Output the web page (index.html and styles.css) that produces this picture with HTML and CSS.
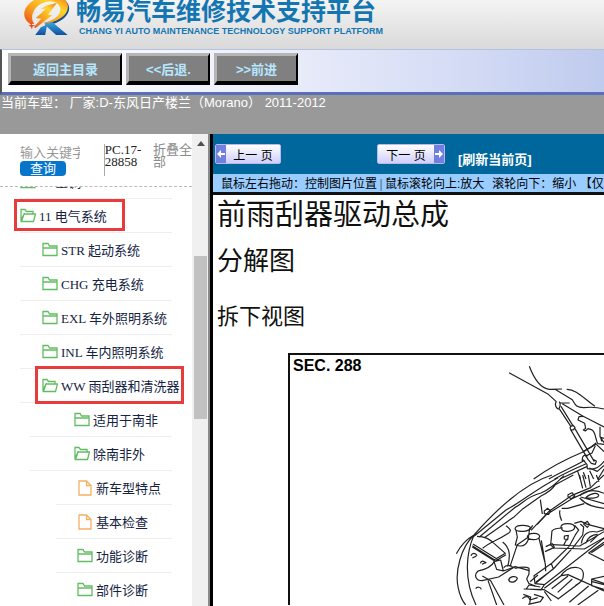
FILE: index.html
```html
<!DOCTYPE html>
<html lang="zh-CN">
<head>
<meta charset="utf-8">
<title>畅易汽车维修技术支持平台</title>
<link rel="stylesheet" href="styles.css">
</head>
<body>
<svg class="defs" width="0" height="0" aria-hidden="true">
  <symbol id="folder" viewBox="0 0 16 15"><path d="M1 13.500V1.500h5l1.500 2.500h7.500v9.500H1zM1 6h14"/></symbol>
  <symbol id="folder-open" viewBox="0 0 16 15"><path d="M1 13.500V1.500h4l1.500 2h6.500v2.500M1.500 13.500 4 6h11.500L13.500 13.500zM1.500 11 4.500 5"/></symbol>
  <symbol id="file" viewBox="0 0 14 16"><path d="M1 1h7.500L13 5.500V15H1zM8.500 1v4.500H13"/></symbol>
</svg>

<header class="banner">
  <svg class="logo" viewBox="70 0 145 108" aria-hidden="true">
    <defs>
      <linearGradient id="flame" x1="0" y1="1" x2="1" y2="0"><stop offset="0" stop-color="#e8461c"/><stop offset=".35" stop-color="#f79a1c"/><stop offset=".7" stop-color="#ffd52a"/><stop offset="1" stop-color="#f27a18"/></linearGradient>
      <linearGradient id="leg" x1="0" y1="0" x2="0" y2="1"><stop offset="0" stop-color="#36a8df"/><stop offset="1" stop-color="#124f9f"/></linearGradient>
    </defs>
    <path fill="#174c96" d="M190-5c36 22 20 64-32 78l-10-5c44-10 60-38 42-73z"/>
    <path fill="url(#leg)" d="M135 70l24-3 46 38h-35l-33-30zM107 105l17-23 19-8-6 31z"/>
    <path fill="url(#flame)" d="M93 73C56 50 76 6 121-8h66c36 20 20 66-42 78l-15-2c48-8 65-38 44-58-25-14-58-2-71 22-8 16-7 29 1 39z"/>
    <path fill="url(#flame)" d="M172 9l-26 35 12 2-50 38-5-2 22-26-16-2 31-29-15 2 15-11z"/>
    <path fill="#e44b1e" d="M94 66l4 9 10 1-9 4-2 8-4-8-7-3 8-2z"/>
  </svg>
  <div class="brand">
    <div class="brand-name">畅易汽车维修技术支持平台</div>
    <div class="brand-sub">CHANG YI AUTO MAINTENANCE TECHNOLOGY SUPPORT PLATFORM</div>
  </div>
</header>

<nav class="toolbar">
  <button class="tool wide">返回主目录</button>
  <button class="tool">&lt;&lt;后退.</button>
  <button class="tool">&gt;&gt;前进</button>
</nav>

<div class="model">当前车型： 厂家:D-东风日产楼兰（Morano） 2011-2012</div>

<div class="workspace">
  <aside class="sidebar">
    <div class="side-main">
      <form class="search">
        <div class="query">
          <input class="keyword" type="text" placeholder="输入关键字" aria-label="关键字">
          <button class="go" type="button">查询</button>
        </div>
        <div class="code">PC.17-28858</div>
        <a class="collapse" href="#">折叠全部</a>
      </form>
      <div class="tree-view">
        <ul class="tree">
          <li class="row root"><svg class="icon"><use href="#folder"/></svg><a href="#">10 空调</a></li>
          <li class="row root marked"><svg class="icon"><use href="#folder-open"/></svg><a href="#">11 电气系统</a></li>
          <li class="row system"><svg class="icon"><use href="#folder"/></svg><a href="#">STR 起动系统</a></li>
          <li class="row system"><svg class="icon"><use href="#folder"/></svg><a href="#">CHG 充电系统</a></li>
          <li class="row system"><svg class="icon"><use href="#folder"/></svg><a href="#">EXL 车外照明系统</a></li>
          <li class="row system"><svg class="icon"><use href="#folder"/></svg><a href="#">INL 车内照明系统</a></li>
          <li class="row system marked"><svg class="icon"><use href="#folder-open"/></svg><a href="#">WW 雨刮器和清洗器</a></li>
          <li class="row region"><svg class="icon"><use href="#folder"/></svg><a href="#">适用于南非</a></li>
          <li class="row region"><svg class="icon"><use href="#folder-open"/></svg><a href="#">除南非外</a></li>
          <li class="row topic"><svg class="icon doc"><use href="#file"/></svg><a href="#">新车型特点</a></li>
          <li class="row topic"><svg class="icon doc"><use href="#file"/></svg><a href="#">基本检查</a></li>
          <li class="row topic"><svg class="icon"><use href="#folder"/></svg><a href="#">功能诊断</a></li>
          <li class="row topic"><svg class="icon"><use href="#folder"/></svg><a href="#">部件诊断</a></li>
        </ul>
      </div>
    </div>
    <div class="scrollbar"><span class="arrow"></span><span class="thumb"></span></div>
  </aside>

  <main class="viewer">
    <div class="pager">
      <button class="page prev"><svg class="cap" viewBox="0 0 10 16"><path d="M1 8l4-4v3h4v2H5v3z"/></svg><span>上一 页</span></button>
      <button class="page next"><span>下一 页</span><svg class="cap" viewBox="0 0 10 16"><path d="M9 8L5 4v3H1v2h4v3z"/></svg></button>
      <a class="refresh" href="#">[刷新当前页]</a>
    </div>
    <div class="hint"><span>鼠标左右拖动：控制图片位置</span><span class="bar">|</span><span>鼠标滚轮向上:放大</span><span class="later">滚轮向下：缩小&nbsp;【仅</span></div>
    <article class="document">
      <h1>前雨刮器驱动总成</h1>
      <h2>分解图</h2>
      <h3>拆下视图</h3>
      <figure class="figure">
        <figcaption>SEC. 288</figcaption>
        <svg class="drawing" viewBox="290 356 314 250" preserveAspectRatio="xMinYMin slice" aria-hidden="true">
          <!-- hood, stay and wiper linkage -->
          <g transform="translate(440 350) scale(.33333)">
            <path d="M207 71 325 136 349 158M268 52c12 32 30 66 60 69l38-1M345 121l52 31c11 20 14 23 34 24 25-3 39-2 61 4M380 121c28-1 50 26 85 51M360 162h29M367 164l61 37 64 33"/>
            <path d="M349 157c-6 9-1 23 8 23M358 158c4 7 3 14-1 20M357 178l36 55M363 172l37 60M390 235l8-7 7 7-5 8-8-1zM392 242l52 89M403 236l60 102M444 331l10 12 12 3 3-10-9-4"/>
            <path d="M430 202l-13 1-3 10 20 10 3 15-7 5 6 3 8-7 10 3c15 5 12 35 20 42l18 2M480 233v30l12 18M492 268l-10-3 3 12M466 283l26 25M469 281l-15 12-26 15M466 290l-10 22-20 10"/>
            <path d="M281 390C330 355 375 331 429 309l39-23M327 390c35-21 70-34 107-56M344 390c33-19 65-33 93-45M360 390l80-37M427 337c-2-18 7-22 17-16M429 332l12 15 1 12c16 4 34 0 50-22M448 357l24 10 20-18M413 367l8 23M430 370l8 20M449 365l12 25M492 360l-18 30"/>
          </g>
          <!-- engine bay -->
          <g transform="translate(440 476) scale(.33333)">
            <path d="M336 0C270 20 190 80 102 180c-38 35-59 110-47 160 5 24 14 40 22 50M49 236C64 208 84 190 102 180M102 180C80 230 69 310 108 390M354 8C275 50 247 80 198 105L102 184M372 2C345 28 328 44 303 54 260 64 246 88 224 98L118 186M400 0l-54 29c-10 16-24 25-43 34l-54 38-26 24-43 30-47 33"/>
            <path d="M418 0l10 40M428 0l10 38M445 0l6 35M469 0l8 20M492 0l-40 38-56 23-69 48-54 57M480 33l-84 38-77 48-27 29M384 59l12-6 8 10-10 8-10-6zM313 108l10-8 9 8-6 10-13-2zM301 74l6 43M365 100h18l50-14"/>
            <path d="M419 63c15-19 49-20 73-8M419 69c21 23 47 28 73 31M437 68c20-17 40-15 39-6-4 8-25 9-39 6M422 66l70 20M360 106c-3 10 0 20 5 31"/>
            <path d="M225 161c2-15 47-11 46-2-4 12-43 14-46 2zM228 166l4 20-6 24c20 7 32 2 38-14l5-36M278 151l-8 13M262 185c5-15 37-11 37 0-3 12-35 12-37 0zM262 188l-30 21-22 66M297 190l19 77 1 22M304 196l11 66M315 230l28-13-6-11-20 9"/>
            <path d="M111 184c24 0 36 7 51 21l34 30-33 19-66-42M99 207l78 49M97 216l67 42M128 220c24-20 45-24 72-42 20-10 9-17-2-26M188 201c22 18 24 40 15 74M198 239l-37 22M162 260l20-5 8 33-20-5zM190 288l36-13 42 12"/>
            <path d="M93 242c4-10 14-8 18 0M97 249l12-6M121 265c3-12 15-4 18-1M126 268l10-5M107 341c4-7 15-5 17 2M163 260c-12 21-35 25-49 28-14 13-6 29 12 29l50-11 48-31M127 303l25 14 40 73M144 316l26 74M206 315c3-12 22-13 26-5-4 13-22 15-26 5zM191 278c7-10 24-8 28 0M224 280c22-5 35-5 43 0v17l-7 15 7 14 19 7"/>
            <path d="M336 167l-4 43 13 11M336 168c6-8 22-9 33-9M363 155c2-13 39-12 41 1 0 14-37 20-41 2zM403 145l20-6 19 9 50 13M404 151l12 14-9 13-20 37-51 49M421 147l10 9-3 24-29 38-59 64-52 39M336 264l-54 38 3 24 55-45-7-17M337 209l82 4 73-43M339 219l94 3 59-34M424 205c5-28 20-40 47-34l21-7M437 205c6-18 18-26 36-27M451 202l21-20M431 147l11-8 7 10-7 8zM373 183l12-2-2 13-10-2zM380 193l-9 18"/>
            <path d="M286 326l27 3-10 16-44-3 8-12 34 6M251 342l62 2 43 28M270 320l24-20M313 329l179-139M492 202l-46 32 46 23M454 233l38-25M313 340l50-38c24-34 64-29 67-8 2 23-10 29-24 38M364 302l20-3 108 49M384 303l-49 38M397 312l-44 40M421 322l-68 51M446 333l-58 49M475 346l-62 44M492 304l-37 8v20l37 11M457 320l35 9M457 313l35 12M247 371c12-12 20-5 23 4l23-7M250 358l22 8-3 19M282 358l28 9-9 13-36 8M313 349l21 29"/>
          </g>
        </svg>
      </figure>
    </article>
  </main>
</div>
</body>
</html>
```
FILE: styles.css
```css
*, *::after { box-sizing: border-box; }

body {
  margin: 0;
  height: 100vh;
  overflow: hidden;
  display: flex;
  flex-direction: column;
  background: #fff;
  color: #000;
  font-family: "Liberation Sans", "Noto Sans CJK SC", sans-serif;
  font-size: 13px;
}

button { font-family: inherit; padding: 0; white-space: nowrap; }
a { color: inherit; text-decoration: none; }
.defs { position: absolute; }

/* Banner */
.banner {
  flex: none;
  display: flex;
  gap: 5px;
  padding-left: 23px;
  height: 49px;
  overflow: hidden;
  background: linear-gradient(#f4f4f4, #d9d9d9);
}
.logo { width: 48px; height: 36px; flex: none; }
.brand { color: #1476b1; font-weight: bold; white-space: nowrap; }
.brand-name { font-size: 25px; line-height: 22px; height: 24px; }
.brand-sub { font-size: 9px; line-height: 14px; padding-left: 3px; }

/* Main navigation */
.toolbar {
  flex: none;
  display: flex;
  gap: 4px;
  padding: 3px 6px 7px;
  border-left: 2px solid #555;
  border-top: 1px solid #b4c3df;
  border-bottom: 3px solid #596fbc;
  background: linear-gradient(90deg, #fff, #eef0fb 40%, #d5dcf5 75%, #bfcbee);
}
.tool {
  width: 84px;
  height: 32px;
  border-style: solid;
  border-width: 3px 2px 4px 3px;
  border-color: #b5b5b5 #000 #000 #b5b5b5;
  background: #808080;
  color: #b5e7ff;
  font-size: 13px;
  font-weight: bold;
}
.tool.wide { width: 114px; }

.model {
  flex: none;
  height: 39px;
  padding-left: 1px;
  line-height: 15px;
  background: #999;
  color: #fff;
  white-space: pre;
}

.workspace { flex: 1; min-height: 0; display: flex; }

/* Sidebar */
.sidebar {
  flex: none;
  width: 213px;
  display: flex;
  border-right: 3px solid #000;
  font-family: "Liberation Serif", "Noto Sans CJK SC", serif;
}
.side-main { flex: 1; min-width: 0; display: flex; flex-direction: column; }
.search {
  flex: none;
  display: flex;
  margin: 0;
  height: 53px;
  padding: 10px 0 0 20px;
  border-bottom: 1px dashed #bbb;
  color: #8c8c8c;
  line-height: 12px;
}
.query { width: 85px; }
.keyword {
  display: block;
  width: 60px;
  height: 17px;
  padding: 0;
  border: 0;
  outline: 0;
  background: transparent;
  font: inherit;
  line-height: 17px;
}
.keyword::placeholder { color: #999; }
.go {
  display: block;
  width: 46px;
  height: 15px;
  border: 0;
  border-radius: 4px;
  background: #0875cc;
  color: #fff;
  font-size: 13px;
  line-height: 15px;
}
.code {
  width: 50px;
  height: 32px;
  border-left: 1px solid #aaa;
  color: #222;
}
.collapse { flex: none; width: 39px; word-break: break-all; }

.tree-view {
  flex: 1;
  min-height: 0;
  overflow: hidden;
  display: flex;
  flex-direction: column;
}
/* Scrolled so that only the foot of the first row shows */
.tree { margin: -22px 20px 0 0; padding: 0; list-style: none; }
.row {
  position: relative;
  display: flex;
  align-items: center;
  gap: 3px;
  height: 34px;
  margin-left: 20px;
  border-bottom: 1px solid #eee;
  color: #14233f;
  white-space: nowrap;
}
.system { padding-left: 22px; }
.region { margin-left: 30px; padding-left: 44px; }
.topic { margin-left: 56px; padding-left: 21px; }
.icon {
  flex: none;
  width: 16px;
  height: 15px;
  fill: none;
  stroke: #62bd62;
  stroke-width: 1.3;
}
.icon.doc { height: 16px; stroke: #f4b066; }
.marked::after {
  content: "";
  position: absolute;
  top: 0;
  left: -6px;
  width: 111px;
  height: 32px;
  border: 3px solid #e83c3c;
}
.system.marked::after { top: -3px; left: 15px; width: 149px; height: 38px; }

.scrollbar {
  width: 18px;
  padding: 7px 0 0 2px;
  border-right: 2px solid #8a8a8a;
  background: #f0f0f0;
}
.arrow {
  display: block;
  width: 0;
  margin: 0 0 110px 3px;
  border: 4px solid transparent;
  border-top: 0;
  border-bottom: 5px solid #505050;
}
.thumb { display: block; width: 13px; height: 163px; background: #c1c1c1; }

/* Viewer */
.viewer { flex: 1; min-width: 0; overflow: hidden; }
.pager {
  display: flex;
  align-items: center;
  height: 40px;
  padding-left: 2px;
  background: #00679c;
}
.page {
  display: flex;
  align-items: center;
  height: 20px;
  border: 1px solid #b9b9ee;
  border-radius: 2px;
  background: linear-gradient(#fff, #cfcffb);
  color: #000;
  font-size: 12px;
}
.page span { flex: 1; }
.prev { width: 66px; margin-right: 96px; }
.next { width: 68px; margin-right: 13px; }
.cap { width: 10px; height: 18px; background: #7180e0; fill: #fff; }
.refresh { color: #fff; font-weight: bold; padding-top: 8px; }
.hint {
  display: flex;
  height: 21px;
  padding-left: 8px;
  overflow: hidden;
  border-bottom: 3px solid #111;
  background: #99ccff;
  font-size: 12px;
  line-height: 20px;
  white-space: nowrap;
}
.hint span { flex: none; }
.bar { width: 8px; text-align: center; color: #567; }
.later { padding-left: 8px; }

.document { padding-left: 4px; }
h1, h2, h3 { margin: 0; font-weight: normal; color: #111; white-space: nowrap; }
h1 { font-size: 29px; line-height: 40px; }
h2 { font-size: 26px; line-height: 52px; }
h3 { font-size: 22px; line-height: 60px; }
.figure {
  position: relative;
  margin: 6px 0 0 71px;
  border: 2px solid #111;
  border-width: 2px 0 0 2px;
}
figcaption { position: absolute; top: 1px; left: 3px; font-size: 16px; line-height: 20px; font-weight: bold; }
.drawing {
  display: block;
  width: 100%;
  fill: none;
  stroke: #222;
  stroke-width: 3.6;
  stroke-linejoin: round;
}
```
